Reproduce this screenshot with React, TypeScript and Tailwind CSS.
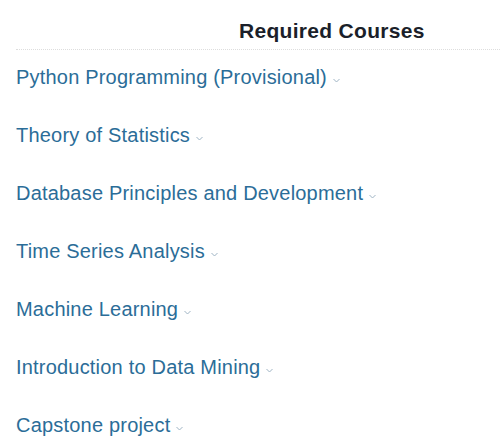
import React from 'react';

const courses = [
  'Python Programming (Provisional)',
  'Theory of Statistics',
  'Database Principles and Development',
  'Time Series Analysis',
  'Machine Learning',
  'Introduction to Data Mining',
  'Capstone project',
];

const Chevron = () => (
  <svg width="7" height="5" viewBox="0 0 7 5" className="ml-[6px] mt-[7px]" fill="none">
    <path d="M0.5 1 L3.5 4 L6.5 1" stroke="#9fb4c4" strokeWidth="1" />
  </svg>
);

const App: React.FC = () => {
  return (
    <div className="w-[500px] h-[447px] bg-white overflow-hidden" style={{ fontFamily: '"Liberation Sans", Arial, sans-serif' }}>
      <div className="pl-[16px]">
        <div className="h-[50px] border-b border-dotted border-[#dddddd] flex items-end pb-[4px] pl-[223px]">
          <h2 className="text-[21px] leading-[28px] font-bold text-[#1b1f2a] tracking-[0.3px]">Required Courses</h2>
        </div>
        <ul className="pt-[13px]">
          {courses.map(c => (
            <li key={c} className="h-[58px] flex items-start">
              <a className="flex items-center text-[20px] leading-[28px] tracking-[0.2px] text-[#2b6d98] cursor-pointer">
                {c}
                <Chevron />
              </a>
            </li>
          ))}
        </ul>
      </div>
    </div>
  );
};

export default App;
